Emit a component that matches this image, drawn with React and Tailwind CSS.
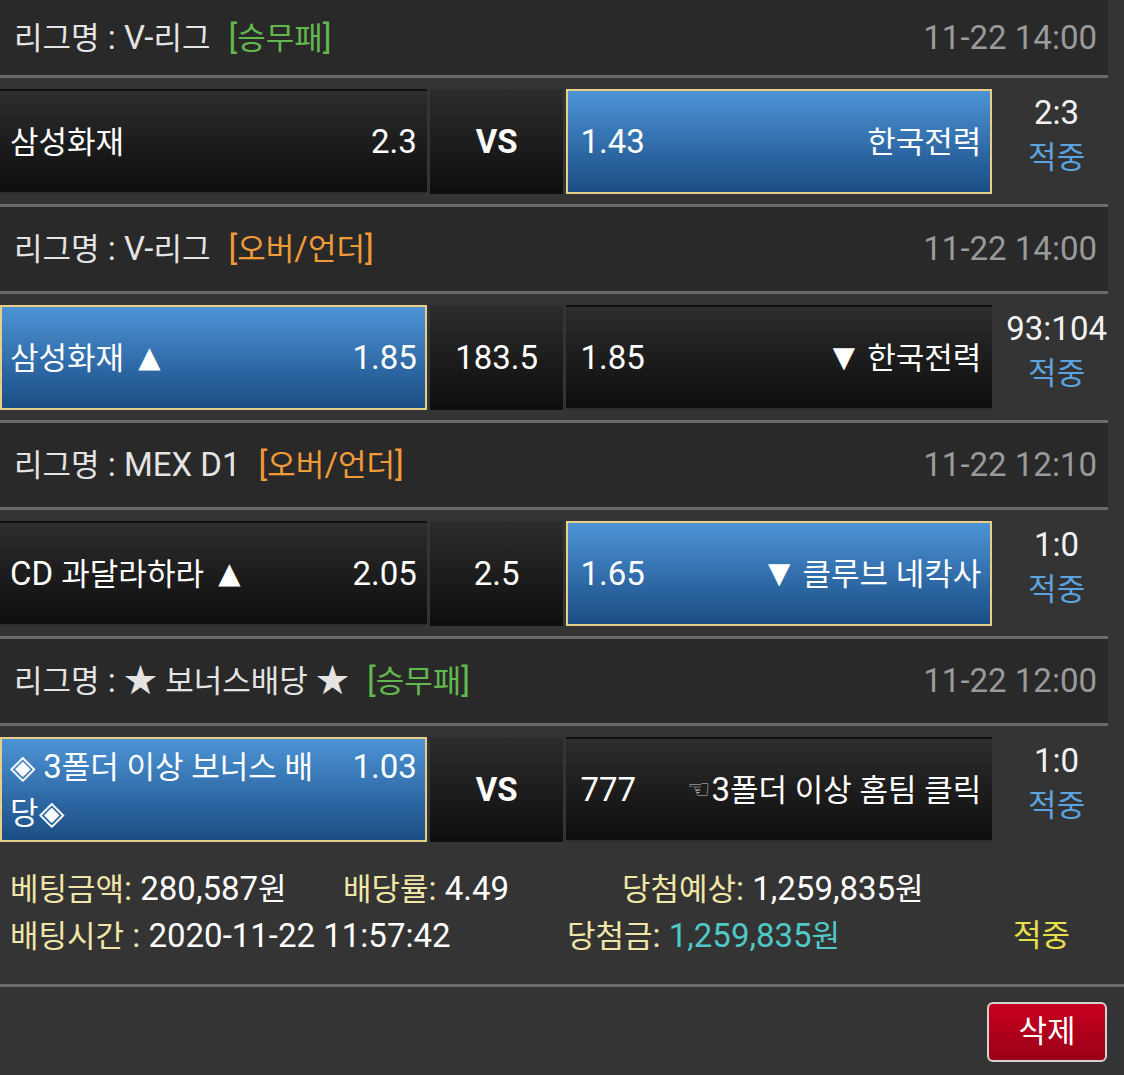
import React from "react";

const rows = [
  {
    league: "V-리그",
    type: "[승무패]",
    typeClass: "text-[#62b84e]",
    date: "11-22 14:00",
    home: "삼성화재",
    homeOdds: "2.3",
    center: "VS",
    away: "한국전력",
    awayOdds: "1.43",
    pick: "away",
    score: "2:3",
  },
  {
    league: "V-리그",
    type: "[오버/언더]",
    typeClass: "text-[#f09a38]",
    date: "11-22 14:00",
    home: "삼성화재 ▲",
    homeOdds: "1.85",
    center: "183.5",
    away: "▼ 한국전력",
    awayOdds: "1.85",
    pick: "home",
    score: "93:104",
  },
  {
    league: "MEX D1",
    type: "[오버/언더]",
    typeClass: "text-[#f09a38]",
    date: "11-22 12:10",
    home: "CD 과달라하라 ▲",
    homeOdds: "2.05",
    center: "2.5",
    away: "▼ 클루브 네칵사",
    awayOdds: "1.65",
    pick: "away",
    score: "1:0",
  },
  {
    league: "★ 보너스배당 ★",
    type: "[승무패]",
    typeClass: "text-[#62b84e]",
    date: "11-22 12:00",
    home: "◈ 3폴더 이상 보너스 배당◈",
    homeOdds: "1.03",
    center: "VS",
    away: "3폴더 이상 홈팀 클릭",
    hand: true,
    awayOdds: "777",
    pick: "home",
    score: "1:0",
  },
];

// hangul runs render a little smaller than the latin digits
const K = ({ children }) => {
  const parts = String(children).split(/([\uAC00-\uD7A3]+(?: [\uAC00-\uD7A3]+)*|[▲▼])/);
  return parts.map((p, i) => {
    if (!p) return null;
    if (p === "▲")
      return (
        <span key={i} className="ml-[6px] align-[2px] font-['DejaVu_Sans',sans-serif] text-[29px]">
          {p}
        </span>
      );
    if (p === "▼")
      return (
        <span key={i} className="mr-[4px] align-[2px] font-['DejaVu_Sans',sans-serif] text-[29px]">
          {p}
        </span>
      );
    if (/[\uAC00-\uD7A3]/.test(p))
      return (
        <span key={i} className="text-[31px]">
          {p}
        </span>
      );
    return <React.Fragment key={i}>{p}</React.Fragment>;
  });
};

const dark = "border-transparent bg-linear-to-b from-[#2d2d2d] to-[#0e0e0e]";
const picked = "border-[#e6cf88] bg-linear-to-b from-[#4c94d6] to-[#1b4d85]";

const Line = () => <div className="h-[3px] bg-[#6a6a6a]" />;

const BetRow = ({ row, first }) => {
  return (
    <div>
      <div
        className={`flex items-center justify-between bg-[#292929] pl-[14px] pr-[11px] ${
          first ? "h-[75px]" : "h-[84px]"
        }`}
      >
        <div className="text-[#e4e4e4]">
          <K>{`리그명 : ${row.league}`}</K>
          <span className={`ml-[18px] ${row.typeClass}`}>
            <K>{row.type}</K>
          </span>
        </div>
        <div className="text-[#9a9a9a]">{row.date}</div>
      </div>
      <Line />
      <div className="flex gap-[3px] pt-[11px] pb-[10px]">
        <div
          className={`flex h-[105px] w-[428px] items-center border-2 px-2 text-white ${
            row.pick === "home" ? picked : dark
          }`}
        >
          <div className="w-full leading-[45px]">
            <span className="float-right ml-9">{row.homeOdds}</span>
            <K>{row.home}</K>
          </div>
        </div>
        <div
          className={`flex h-[105px] w-[134px] items-center justify-center text-white ${dark} ${
            row.center === "VS" ? "font-bold" : ""
          }`}
        >
          {row.center}
        </div>
        <div
          className={`flex h-[105px] w-[427px] items-center justify-between border-2 pl-3 pr-[9px] text-white ${
            row.pick === "away" ? picked : dark
          }`}
        >
          <span>{row.awayOdds}</span>
          <span>
            {row.hand && (
              <span className="mr-[1px] align-[3px] font-['DejaVu_Sans',sans-serif] text-[26px] text-[#c4c4c4]">
                ☜
              </span>
            )}
            <K>{row.away}</K>
          </span>
        </div>
        <div className="flex w-[113px] flex-col items-center justify-center pb-[14px] pl-[10px] leading-[45px]">
          <span className="text-[#f2f2f2]">{row.score}</span>
          <span className="text-[31px] text-[#5ca2df]">적중</span>
        </div>
      </div>
    </div>
  );
};

export default function App() {
  return (
    <div className="min-h-screen w-[1124px] bg-[#343434] font-[Roboto,'Noto_Sans_CJK_KR',sans-serif] text-[33px]">
      <div className="w-[1108px]">
        {rows.map((row, i) => (
          <div key={i}>
            <BetRow row={row} first={i === 0} />
            {i < rows.length - 1 && <Line />}
          </div>
        ))}
      </div>

      <div className="pt-[14px] pb-[24px] pl-[10px] leading-[46px]">
        <div className="flex">
          <span className="w-[333px] text-[#efe6a8]">
            <K>베팅금액</K>: <span className="text-white"><K>280,587원</K></span>
          </span>
          <span className="w-[279px] text-[#efe6a8]">
            <K>배당률</K>: <span className="text-white">4.49</span>
          </span>
          <span className="text-[#efe6a8]">
            <K>당첨예상</K>: <span className="text-white"><K>1,259,835원</K></span>
          </span>
        </div>
        <div className="flex">
          <span className="w-[557px] text-[#efe6a8]">
            <K>배팅시간</K> : <span className="text-white">2020-11-22 11:57:42</span>
          </span>
          <span className="w-[446px] text-[#efe6a8]">
            <K>당첨금</K>: <span className="text-[#4fc8c8]"><K>1,259,835원</K></span>
          </span>
          <span className="text-[31px] text-[#e8e04a]">적중</span>
        </div>
      </div>
      <Line />
      <div className="flex justify-end pt-[15px] pr-[17px]">
        <button className="h-[60px] w-[120px] rounded-md border-2 border-[#d2d2d2] bg-linear-to-b from-[#c8001f] to-[#990017] text-[31px] text-white">
          삭제
        </button>
      </div>
    </div>
  );
}
